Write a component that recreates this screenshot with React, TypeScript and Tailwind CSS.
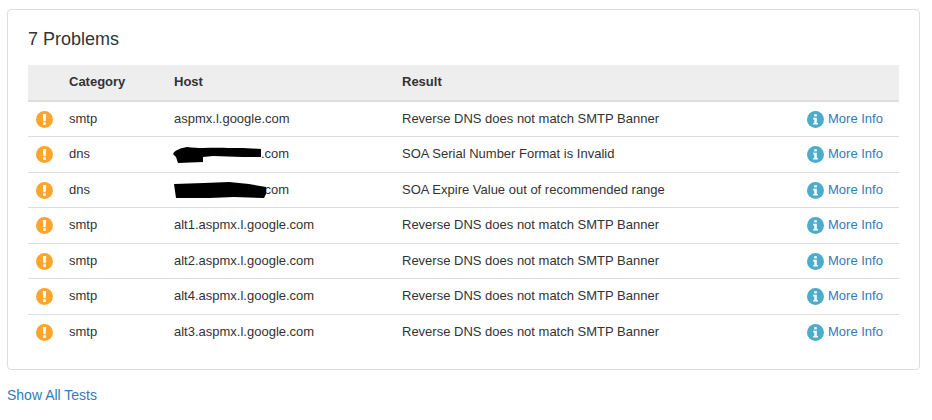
const rows = [
  { category: "smtp", host: "aspmx.l.google.com", result: "Reverse DNS does not match SMTP Banner" },
  { category: "dns", host: ".com", result: "SOA Serial Number Format is Invalid", blot: 1 },
  { category: "dns", host: ".com", result: "SOA Expire Value out of recommended range", blot: 2 },
  { category: "smtp", host: "alt1.aspmx.l.google.com", result: "Reverse DNS does not match SMTP Banner" },
  { category: "smtp", host: "alt2.aspmx.l.google.com", result: "Reverse DNS does not match SMTP Banner" },
  { category: "smtp", host: "alt4.aspmx.l.google.com", result: "Reverse DNS does not match SMTP Banner" },
  { category: "smtp", host: "alt3.aspmx.l.google.com", result: "Reverse DNS does not match SMTP Banner" },
];

function WarnIcon() {
  return (
    <svg width="17" height="17" viewBox="0 0 17 17" className="block">
      <circle cx="8.5" cy="8.5" r="8.5" fill="#fba52f" />
      <path d="M6.9 3h3.2l-.4 7.2H7.3z" fill="#fff" />
      <rect x="7.2" y="11.3" width="2.6" height="2.6" fill="#fff" />
    </svg>
  );
}

function InfoIcon() {
  return (
    <svg width="17" height="17" viewBox="0 0 17 17" className="block">
      <circle cx="8.5" cy="8.5" r="8.5" fill="#4cacc9" />
      <rect x="7.2" y="3.2" width="2.6" height="2.2" fill="#fff" />
      <path d="M6.2 6.8h3.6v5.1h1.1v1.6H6.2v-1.6h1.1V8.4H6.2z" fill="#fff" />
    </svg>
  );
}

// marker scribbles over the domain names
function Blot({ kind }: { kind: number }) {
  if (kind === 1) {
    return (
      <svg width="89" height="18" viewBox="0 0 89 18" className="absolute left-[-1px] top-[1px]">
        <path d="M0 8 C2 4 8 2 14 1 C30 3 40 1 55 2 L70 2 L88 3 L88 11 L70 11 L40 10 L30 11 L30 16 L5 17 L3 11 Z" fill="#000" />
      </svg>
    );
  }
  return (
    <svg width="93" height="18" viewBox="0 0 93 18" className="absolute left-0 top-[1px]">
      <path d="M0 2 L30 1 L55 0 L75 2 L92 5 L92 12 L90 16 L60 15 L35 16 L2 16 Z" fill="#000" />
    </svg>
  );
}

export default function App() {
  return (
    <div className="h-[420px] w-[932px] overflow-hidden bg-white pl-[7px] pr-3 pt-[9px] font-['Liberation_Sans',Arial,sans-serif] text-[13px] leading-[18.57px] text-[#333]">
      <div className="h-[361px] w-[913px] rounded border border-[#ddd] px-5 pt-[19px]">
        <h3 className="mb-4 text-lg leading-5 font-normal text-[#333]">7 Problems</h3>
        <table className="w-[871px] table-fixed border-collapse">
          <thead>
            <tr className="h-[36px] border-b-2 border-[#ddd] bg-[#eee] text-left">
              <th className="w-[41px] p-0"></th>
              <th className="w-[105px] p-0 font-bold">Category</th>
              <th className="w-[228px] p-0 font-bold">Host</th>
              <th className="p-0 font-bold">Result</th>
              <th className="w-[100px] p-0"></th>
            </tr>
          </thead>
          <tbody>
            {rows.map((row, i) => (
              <tr key={i} className="h-[35.5px] border-t border-[#ddd] first:border-t-0">
                <td className="p-0 pl-2 pt-[0.5px]">
                  <WarnIcon />
                </td>
                <td className="p-0 pt-[0.5px]">{row.category}</td>
                <td className="p-0 pt-[0.5px]">
                  {row.blot ? (
                    <span className="relative block pl-[87px]">
                      <Blot kind={row.blot} />
                      {row.host}
                    </span>
                  ) : (
                    row.host
                  )}
                </td>
                <td className="p-0 pt-[0.5px]">{row.result}</td>
                <td className="p-0 pt-[0.5px]">
                  <a href="#" className="flex items-center gap-1 pl-2 text-[#337ab7]">
                    <InfoIcon />
                    More Info
                  </a>
                </td>
              </tr>
            ))}
          </tbody>
        </table>
      </div>
      <a href="#" className="mt-[15px] block text-sm leading-5 text-[#337ab7]">
        Show All Tests
      </a>
    </div>
  );
}
